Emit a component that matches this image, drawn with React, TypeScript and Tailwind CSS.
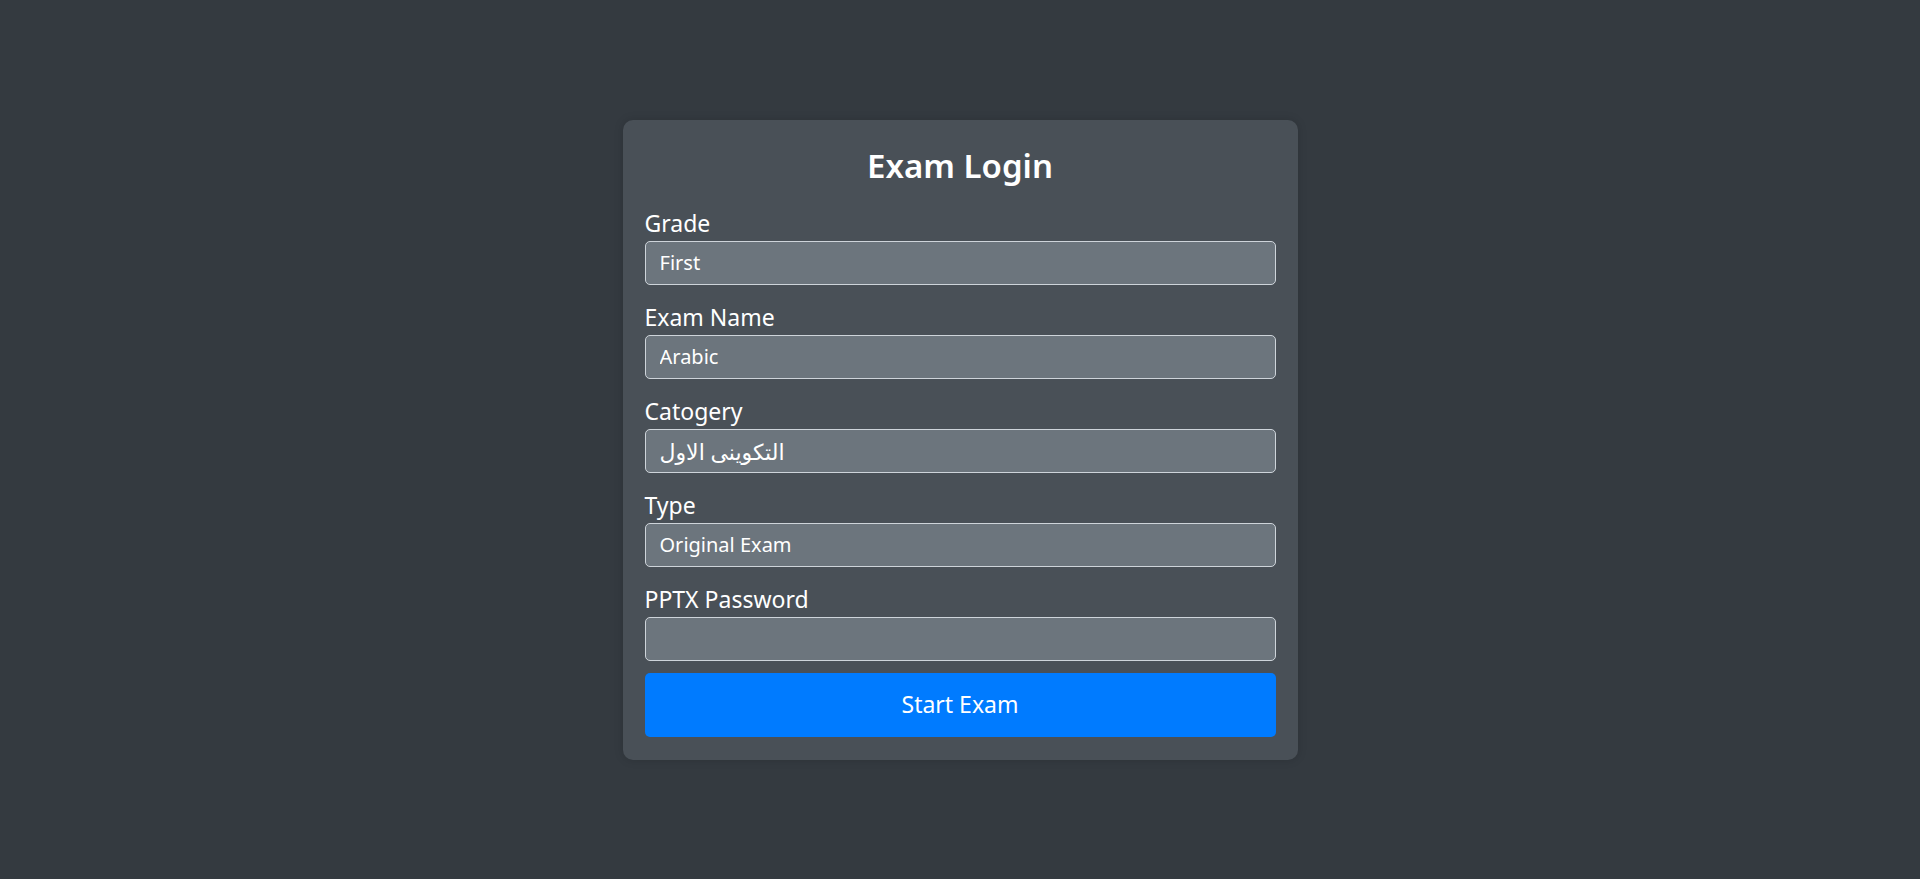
import { useState } from "react"

const fields = [
  { label: "Grade", value: "First" },
  { label: "Exam Name", value: "Arabic" },
  { label: "Catogery", value: "التكوينى الاول", rtl: true },
  { label: "Type", value: "Original Exam" },
]

export default function App() {
  const [password, setPassword] = useState("")

  return (
    <div
      className="min-h-screen flex items-center justify-center bg-[#343a40] text-white"
      style={{ fontFamily: '"Noto Sans", "DejaVu Sans", sans-serif' }}
    >
      <div className="w-[675px] bg-[#495057] rounded-[10px] px-[22px] pt-[25px] pb-[23px] shadow-[0_0_10px_rgba(0,0,0,0.15)]">
        <h2 className="text-[33px] font-semibold leading-[42px] text-center mb-[18px]">Exam Login</h2>

        <form onSubmit={(e) => e.preventDefault()}>
          {fields.map((f) => (
            <div key={f.label} className="mb-[14px]">
              <label className="block text-[23px] leading-[36px]">{f.label}</label>
              <input
                type="text"
                readOnly
                value={f.value}
                className={`block w-full h-[44px] px-[14px] bg-[#6c757d] border border-[#ced4da] rounded-[5px] text-white outline-none ${
                  f.rtl ? "text-[22px]" : "text-[20px]"
                }`}
              />
            </div>
          ))}

          <div className="mb-[12px]">
            <label className="block text-[23px] leading-[36px]">PPTX Password</label>
            <input
              type="password"
              value={password}
              onChange={(e) => setPassword(e.target.value)}
              className="block w-full h-[44px] px-[14px] bg-[#6c757d] border border-[#ced4da] rounded-[5px] text-[20px] text-white outline-none"
            />
          </div>

          <button
            type="submit"
            className="w-full h-[64px] bg-[#007bff] rounded-[5px] text-[23px] text-white"
          >
            Start Exam
          </button>
        </form>
      </div>
    </div>
  )
}
